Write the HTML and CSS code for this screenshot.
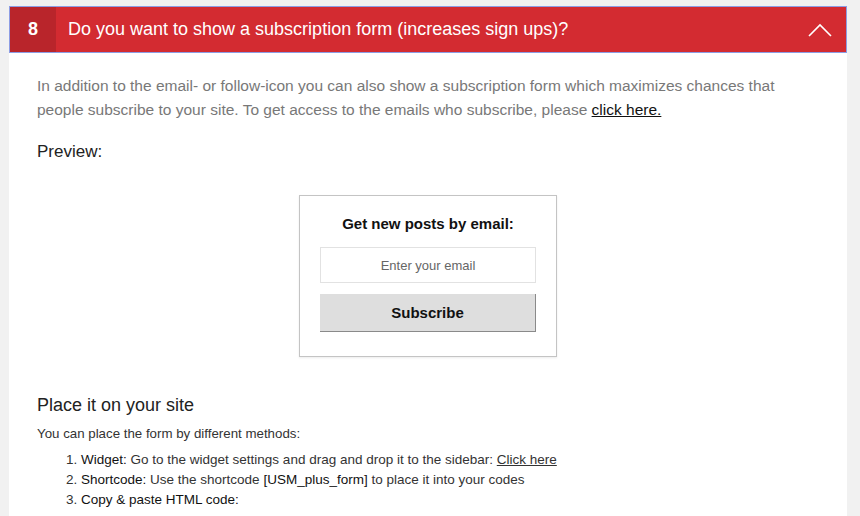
FILE: index.html
```html
<!DOCTYPE html>
<html lang="en">
<head>
    <meta charset="UTF-8">
    <title>Subscription form</title>
    <link rel="stylesheet" href="styles.css">
</head>
<body>

<div class="panel">
    <div class="panel-header">
        <span class="step">8</span>
        <h2 class="panel-title">Do you want to show a subscription form (increases sign ups)?</h2>
        <svg class="chevron" width="24" height="14" viewBox="0 0 24 14">
            <polyline points="1,13 12,2 23,13" fill="none" stroke="#fff" stroke-width="1.6"/>
        </svg>
    </div>

    <div class="panel-body">
        <p class="intro">In addition to the email- or follow-icon you can also show a subscription form which maximizes chances that people subscribe to your site. To get access to the emails who subscribe, please <a href="#">click here.</a></p>

        <h3 class="preview-title">Preview:</h3>

        <div class="preview">
            <div class="subscribe-box">
                <div class="subscribe-heading">Get new posts by email:</div>
                <input type="text" class="subscribe-input" placeholder="Enter your email">
                <button class="subscribe-button">Subscribe</button>
            </div>
        </div>

        <h3 class="place-title">Place it on your site</h3>
        <p class="methods">You can place the form by different methods:</p>
        <ol class="method-list">
            <li><b>Widget:</b> Go to the widget settings and drag and drop it to the sidebar: <a href="#">Click here</a></li>
            <li><b>Shortcode:</b> Use the shortcode <b>[USM_plus_form]</b> to place it into your codes</li>
            <li><b>Copy &amp; paste HTML code:</b></li>
        </ol>
    </div>
</div>

</body>
</html>
```

FILE: styles.css
```css
body {
    margin: 0;
    padding: 6px 13px 0 9px;
    background-color: #f1f1f1;
    font-family: 'Liberation Sans', Arial, sans-serif;
    height: 100vh;
    box-sizing: border-box;
    overflow: hidden;
}

.panel {
    background-color: #fff;
    min-height: 520px;
}

.panel-header {
    display: flex;
    align-items: center;
    height: 45px;
    background-color: #d32b31;
    border: 1px solid #8d9de4;
    color: #fff;
}

.step {
    width: 46px;
    align-self: stretch;
    display: flex;
    align-items: center;
    justify-content: center;
    background-color: #b9252b;
    font-weight: bold;
    font-size: 18px;
}

.panel-title {
    flex: 1;
    margin: 0 0 0 12px;
    font-size: 18px;
    font-weight: normal;
}

.chevron {
    margin-right: 14px;
}

.panel-body {
    padding: 21px 28px 0 28px;
}

.intro {
    margin: 0;
    font-size: 15.5px;
    line-height: 24px;
    color: #787878;
}

.intro a {
    color: #111;
}

.preview-title {
    margin: 20px 0 0;
    font-size: 17px;
    font-weight: normal;
    color: #222;
}

.preview {
    display: flex;
    justify-content: center;
    padding: 33px 0 0;
}

.subscribe-box {
    width: 216px;
    padding: 19px 20px 24px;
    border: 1px solid #c4c4c4;
    box-shadow: 0 1px 2px rgba(0,0,0,0.08);
    display: flex;
    flex-direction: column;
}

.subscribe-heading {
    text-align: center;
    font-weight: bold;
    font-size: 15px;
    color: #111;
    margin-bottom: 15px;
}

.subscribe-input {
    height: 36px;
    box-sizing: border-box;
    border: 1px solid #e2e2e2;
    text-align: center;
    font-family: 'Liberation Sans', Arial, sans-serif;
    font-size: 13px;
    margin: 0 0 11px;
}

.subscribe-input::placeholder {
    color: #666;
}

.subscribe-button {
    height: 38px;
    background-color: #dedede;
    border: none;
    border-right: 1px solid #8a8a8a;
    border-bottom: 1px solid #8a8a8a;
    font-family: 'Liberation Sans', Arial, sans-serif;
    font-weight: bold;
    font-size: 15px;
    color: #111;
}

.place-title {
    margin: 38px 0 0;
    font-size: 18px;
    font-weight: normal;
    color: #222;
}

.methods {
    margin: 10px 0 0;
    font-size: 13.3px;
    color: #333;
}

.method-list {
    margin: 9px 0 0;
    padding-left: 44px;
    font-size: 13.5px;
    line-height: 20px;
    color: #333;
}

.method-list b {
    font-weight: normal;
    color: #111;
}

.method-list a {
    color: #333;
}
```
